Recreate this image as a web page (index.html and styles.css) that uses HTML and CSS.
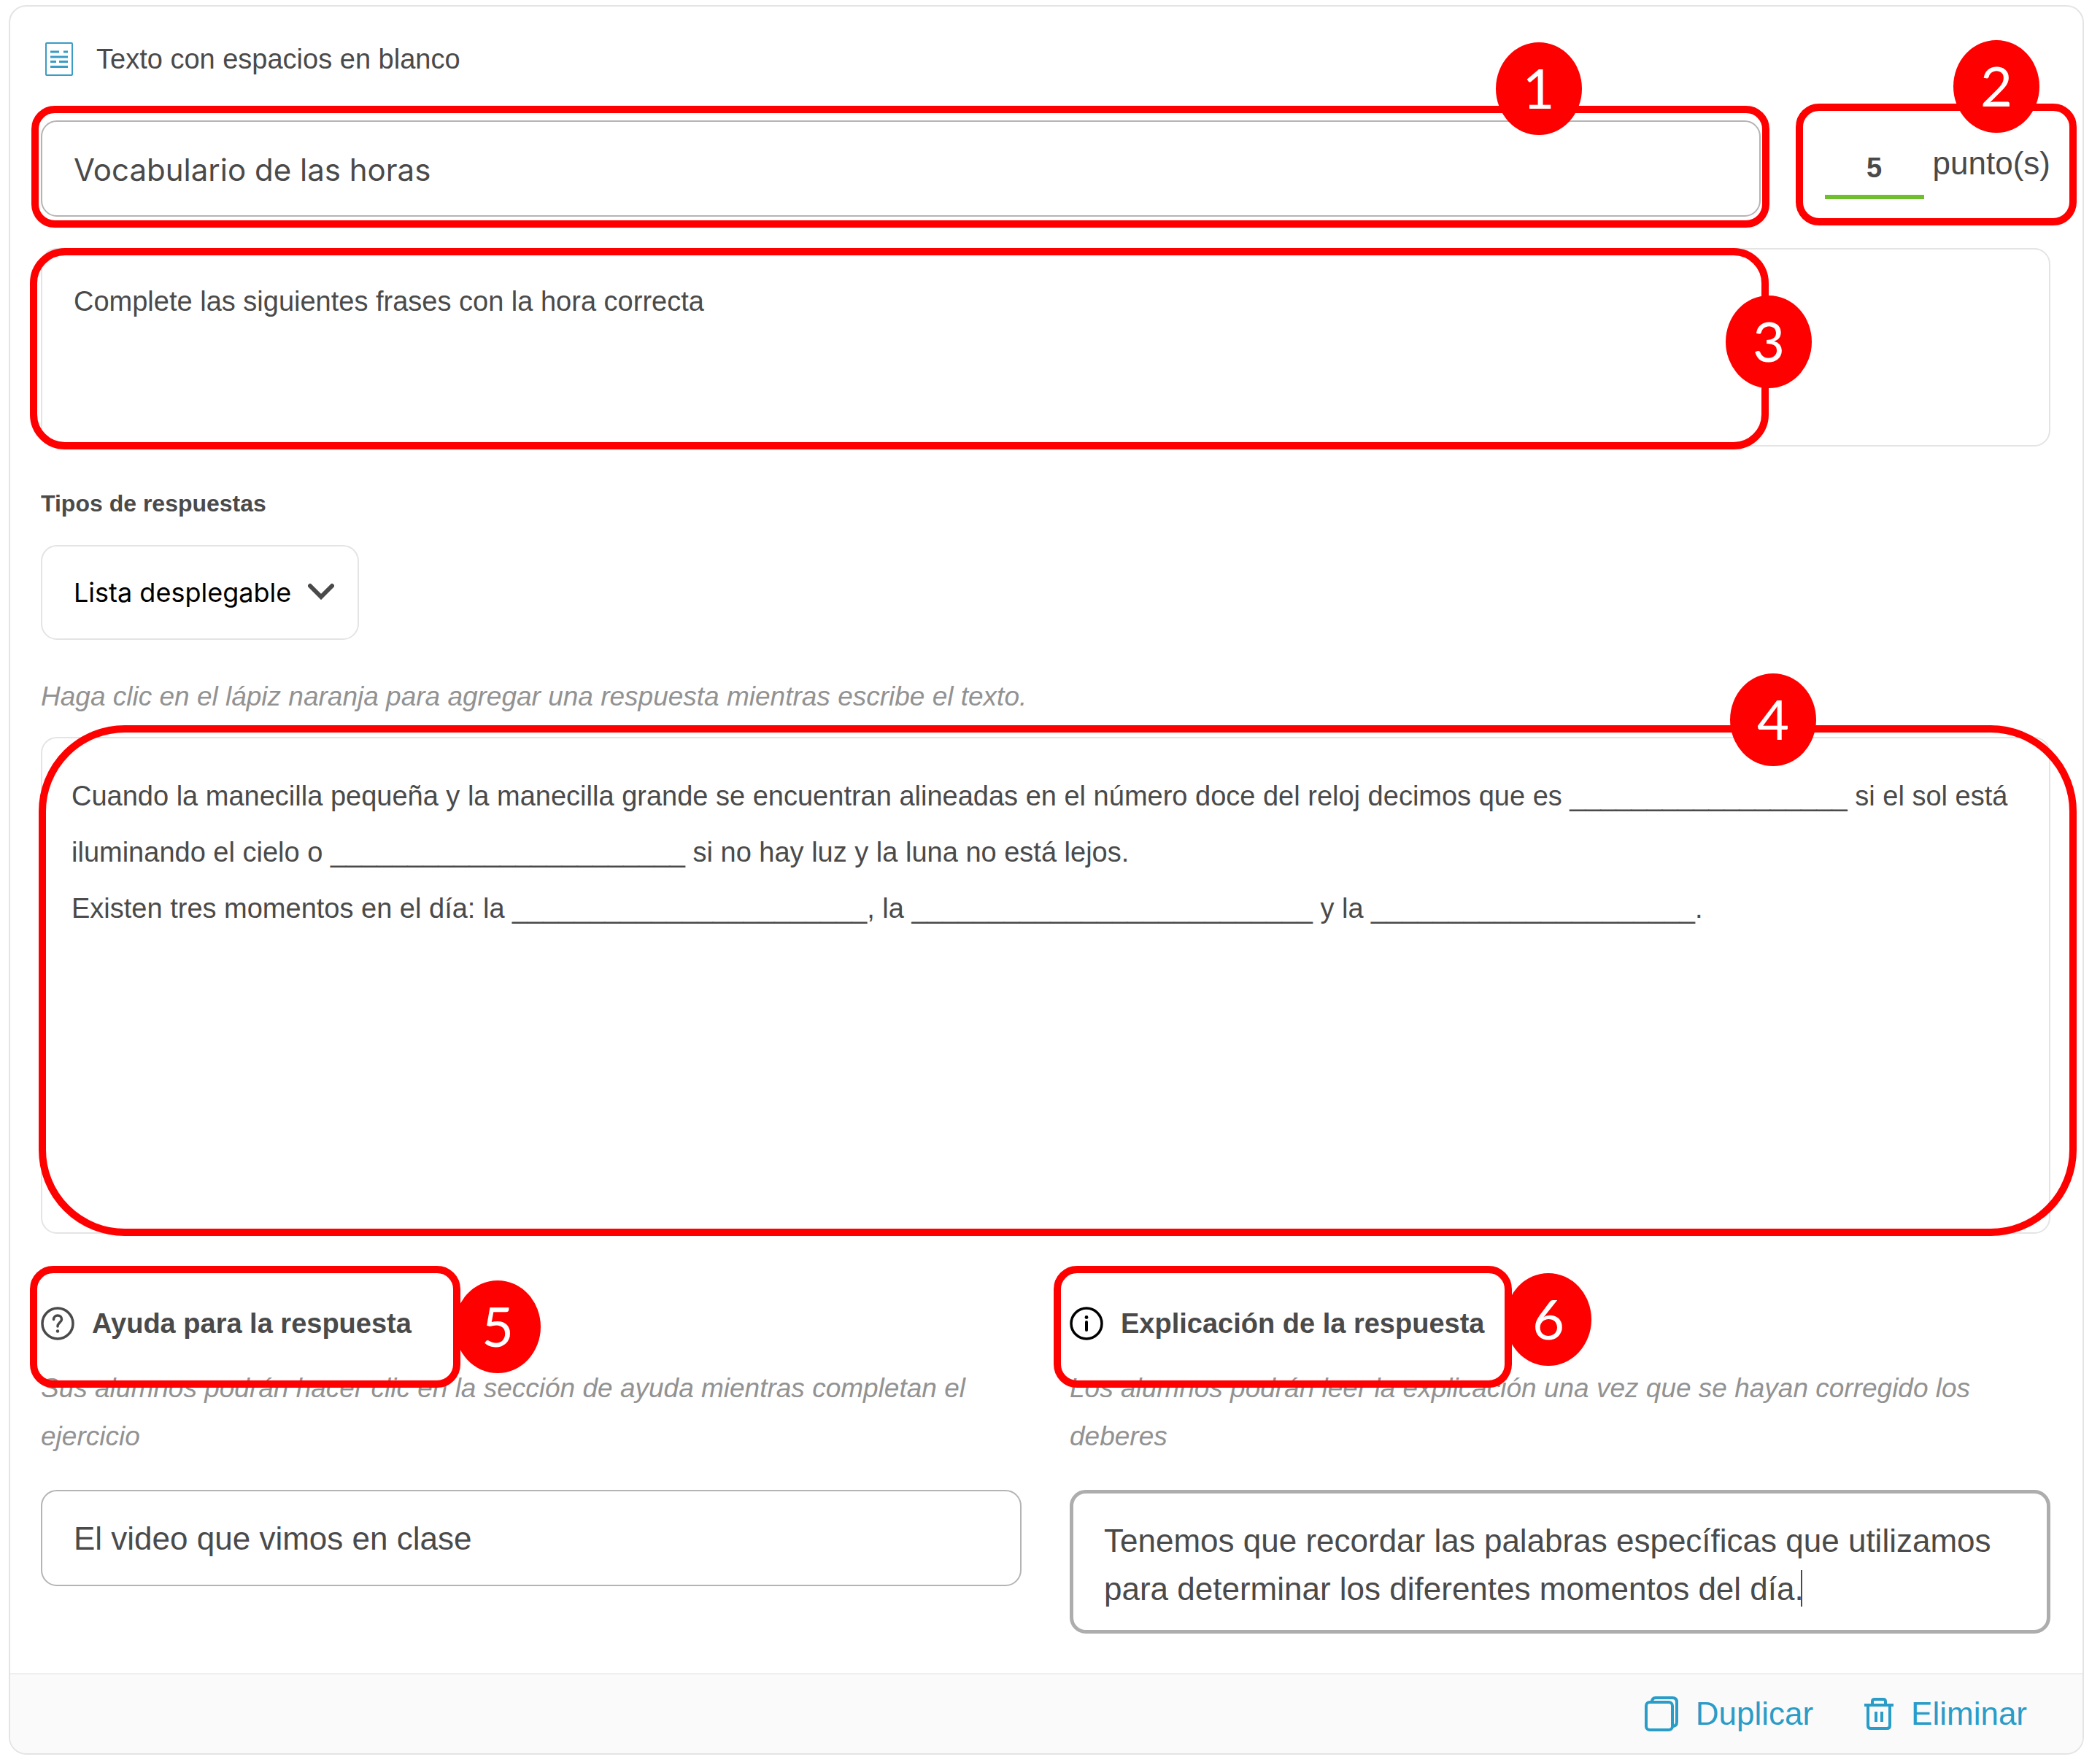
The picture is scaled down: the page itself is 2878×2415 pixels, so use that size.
FILE: index.html
```html
<!DOCTYPE html>
<html lang="es">
<head>
  <meta charset="UTF-8">
  <title>Texto con espacios en blanco</title>
  <meta name="viewport" content="width=device-width,initial-scale=1">
  <link rel="stylesheet" href="styles.css">
</head>
<body>
<main class="card">
  <div class="content">
    <header class="head">
      <svg class="doc-icon" viewBox="0 0 38 46" fill="none" stroke="#3a9cc4">
        <rect x="1" y="1" width="36" height="44" rx="1" stroke-width="2"/>
        <path d="M7 13h12M25 13h6M7 20h24M7 26.500h8M19 26.500h12M7 33.500h24" stroke-width="3"/>
      </svg>
      <h1>Texto con espacios en blanco</h1>
    </header>

    <div class="title-row">
      <div class="marked title-box">
        <input class="field title-field" type="text" aria-label="Título" value="Vocabulario de las horas">
        <span class="outline outline-title"></span>
        <span class="badge badge-title">1</span>
      </div>
      <div class="marked points">
        <input class="points-input" id="points" type="text" value="5">
        <label for="points">punto(s)</label>
        <span class="outline outline-points"></span>
        <span class="badge badge-points">2</span>
      </div>
    </div>

    <div class="marked statement-box">
      <textarea class="area statement" aria-label="Enunciado">Complete las siguientes frases con la hora correcta</textarea>
      <span class="outline outline-statement"></span>
      <span class="badge badge-statement">3</span>
    </div>

    <label class="type-label" for="type">Tipos de respuestas</label>
    <div class="select-box">
      <select id="type">
        <option>Lista desplegable</option>
      </select>
      <svg class="chevron" viewBox="0 0 36 24" fill="none" stroke="#4a4a4a" stroke-width="6" stroke-linecap="round">
        <path d="M3 4l15 15L33 4"/>
      </svg>
    </div>

    <p class="hint">Haga clic en el lápiz naranja para agregar una respuesta mientras escribe el texto.</p>
    <div class="marked gaps-box">
      <textarea class="area gaps" aria-label="Texto">Cuando la manecilla pequeña y la manecilla grande se encuentran alineadas en el número doce del reloj decimos que es __________________ si el sol está iluminando el cielo o _______________________ si no hay luz y la luna no está lejos.
Existen tres momentos en el día: la _______________________, la __________________________ y la _____________________.</textarea>
      <span class="outline outline-gaps"></span>
      <span class="badge badge-gaps">4</span>
    </div>

    <div class="columns">
      <section>
        <div class="marked section-head">
          <svg class="round-icon" viewBox="0 0 46 46" fill="none" stroke="#4a4a4a" stroke-linecap="round">
            <circle cx="23" cy="23" r="21" stroke-width="3.500"/>
            <path d="M17.500 17.500c0-3.500 2.500-5.500 5.500-5.500s5.500 2 5.500 5.200c0 4.300-5.500 4.600-5.500 9.800" stroke-width="3.500"/>
            <circle cx="23" cy="33.500" r="2.200" fill="#4a4a4a" stroke="none"/>
          </svg>
          <h2><label for="help">Ayuda para la respuesta</label></h2>
          <span class="outline outline-help"></span>
          <span class="badge badge-help">5</span>
        </div>
        <p class="note">Sus alumnos podrán hacer clic en la sección de ayuda mientras completan el ejercicio</p>
        <input class="field" id="help" type="text" value="El video que vimos en clase">
      </section>

      <section>
        <div class="marked section-head">
          <svg class="round-icon" viewBox="0 0 46 46" fill="none" stroke="#000" stroke-linecap="round">
            <circle cx="23" cy="23" r="21" stroke-width="3.500"/>
            <path d="M23 21v11" stroke-width="4"/>
            <circle cx="23" cy="14.500" r="2.400" fill="#000" stroke="none"/>
          </svg>
          <h2><label for="explain">Explicación de la respuesta</label></h2>
          <span class="outline outline-explain"></span>
          <span class="badge badge-explain">6</span>
        </div>
        <p class="note">Los alumnos podrán leer la explicación una vez que se hayan corregido los deberes</p>
        <div class="marked">
          <textarea class="area explain" id="explain">Tenemos que recordar las palabras específicas que utilizamos para determinar los diferentes momentos del día.</textarea>
          <span class="caret"></span>
        </div>
      </section>
    </div>
  </div>

  <footer class="actions">
    <button type="button">
      <svg class="copy-icon" viewBox="0 0 46 48" fill="none" stroke="#2a9cc8" stroke-width="4">
        <path d="M10 8c0-4 2-6 5-6h23c4 0 6 2 6 6v27c0 4-2 6-6 6"/>
        <rect x="2" y="8" width="36" height="38" rx="5" fill="#fafafa"/>
      </svg>
      Duplicar
    </button>
    <button type="button">
      <svg class="trash-icon" viewBox="0 0 40 44" fill="none" stroke="#2a9cc8" stroke-width="4">
        <path d="M0 10h40M11 10V5c0-2 1-3 3-3h12c2 0 3 1 3 3v5M5 10v28c0 2 1 4 4 4h22c3 0 4-2 4-4V10"/>
        <path d="M16 19v14M24 19v14" stroke-width="4"/>
      </svg>
      Eliminar
    </button>
  </footer>
</main>
</body>
</html>
```

FILE: styles.css
```css
:root {
  --text: #4a4a4a;
  --muted: #929292;
  --line: #e4e4e4;
  --field: #b4b4b4;
  --blue: #2a9cc8;
  --red: #f00;
  --sans: 'Liberation Sans', Arial, Helvetica, sans-serif;
}
* {
  box-sizing: border-box;
}
body {
  margin: 0;
  padding: 7px 22px 10px 12px;
  background: #fff;
  color: var(--text);
  font-family: var(--sans);
  font-size: 38px;
}
h1, h2, p {
  margin: 0;
}
h1 {
  font-size: 38px;
  font-weight: 400;
}
input, textarea, select, button {
  font-family: inherit;
  color: inherit;
}
.card {
  border: 2px solid var(--line);
  border-radius: 24px;
  overflow: hidden;
}
.content {
  padding: 48px 44px 54px 42px;
}
.head {
  display: flex;
  align-items: center;
  gap: 32px;
  height: 48px;
  padding-left: 6px;
}
.doc-icon {
  width: 38px;
  height: 46px;
}
.title-row {
  display: flex;
  justify-content: space-between;
  gap: 88px;
  margin-top: 60px;
}
.marked {
  position: relative;
}
.title-box {
  flex: 1;
}
.field {
  display: block;
  width: 100%;
  height: 132px;
  padding: 2px 43px 0;
  border: 2px solid var(--field);
  border-radius: 22px;
  background: #fff;
  font-size: 44px;
  outline: none;
}
.title-field {
  font-family: Inter, sans-serif;
  font-size: 42px;
}
.points {
  display: flex;
  align-items: flex-start;
  gap: 12px;
}
.points-input {
  width: 136px;
  height: 108px;
  padding: 28px 0 0;
  border: 0;
  border-bottom: 6px solid #6fbe2e;
  background: transparent;
  font-size: 38px;
  font-weight: 700;
  text-align: center;
  outline: none;
}
.points label {
  padding-top: 34px;
  font-size: 44px;
  line-height: 50px;
}
.area {
  display: block;
  width: 100%;
  border: 2px solid var(--line);
  border-radius: 22px;
  background: #fff;
  resize: none;
  overflow: hidden;
  outline: none;
}
.statement-box {
  margin-top: 43px;
}
.statement {
  height: 272px;
  padding: 40px 43px;
  font-size: 38px;
  line-height: 62px;
}
.type-label {
  display: block;
  margin-top: 56px;
  font-size: 32px;
  line-height: 44px;
  font-weight: 700;
}
.select-box {
  position: relative;
  width: fit-content;
  margin-top: 35px;
}
select {
  display: block;
  height: 130px;
  padding: 0 90px 0 43px;
  border: 2px solid var(--line);
  border-radius: 22px;
  background: #fff;
  color: #000;
  font-family: Inter, sans-serif;
  font-size: 36px;
  appearance: none;
}
.chevron {
  position: absolute;
  right: 34px;
  top: 52px;
  width: 36px;
  height: 24px;
  pointer-events: none;
}
.hint, .note {
  color: var(--muted);
  font-size: 37px;
  font-style: italic;
  line-height: 66px;
}
.hint {
  margin-top: 45px;
}
.gaps-box {
  margin-top: 22px;
}
.gaps {
  height: 681px;
  padding: 41px 40px;
  font-size: 38px;
  line-height: 77px;
}
.columns {
  display: grid;
  grid-template-columns: 1fr 1fr;
  gap: 66px;
  margin-top: 95px;
}
.section-head {
  display: flex;
  align-items: center;
  gap: 24px;
  height: 56px;
}
.round-icon {
  width: 46px;
  height: 46px;
}
h2 {
  font-size: 38px;
  line-height: 44px;
}
.note {
  margin: 28px 0 40px;
}
.explain {
  height: 197px;
  padding: 32px 42px;
  border: 5px solid #adadad;
  font-size: 44px;
  line-height: 66px;
}
.caret {
  position: absolute;
  left: 1002px;
  top: 110px;
  width: 2px;
  height: 50px;
  background: var(--text);
}
.actions {
  display: flex;
  justify-content: flex-end;
  gap: 70px;
  height: 110px;
  padding: 0 76px;
  border-top: 2px solid #efefef;
  background: #fafafa;
}
.actions button {
  display: flex;
  align-items: center;
  gap: 24px;
  padding: 0;
  border: 0;
  background: none;
  color: var(--blue);
  font-size: 44px;
}
.copy-icon {
  width: 46px;
  height: 48px;
}
.trash-icon {
  width: 40px;
  height: 44px;
}

/* numbered red callouts over the form */
.outline {
  position: absolute;
  border: 10px solid var(--red);
  border-radius: 32px;
  pointer-events: none;
}
.badge {
  position: absolute;
  width: 118px;
  height: 127px;
  border-radius: 50%;
  background: var(--red);
  color: #fff;
  font-family: Lato, sans-serif;
  font-size: 76px;
  line-height: 124px;
  text-align: center;
  pointer-events: none;
}
.outline-title {
  inset: -20px -12px -15px -13px;
}
.badge-title {
  right: 245px;
  top: -107px;
}
.outline-points {
  inset: -23px -36px -12px -40px;
}
.badge-points {
  right: 15px;
  top: -110px;
}
.outline-statement {
  inset: 0 386px -4px -15px;
  border-radius: 48px;
}
.badge-statement {
  right: 327px;
  top: 65px;
}
.outline-gaps {
  inset: -16px -36px -3px -3px;
  border-radius: 118px;
}
.badge-gaps {
  right: 321px;
  top: -87px;
}
.outline-help, .outline-explain {
  top: -51px;
  height: 167px;
}
.outline-help {
  left: -15px;
  width: 590px;
}
.badge-help {
  left: 567px;
  top: -31px;
}
.outline-explain {
  left: -22px;
  width: 628px;
}
.badge-explain {
  left: 597px;
  top: -41px;
}
```
